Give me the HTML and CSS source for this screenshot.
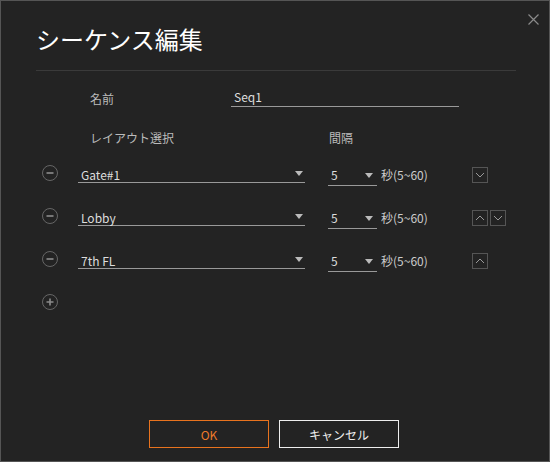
FILE: index.html
```html
<!DOCTYPE html>
<html lang="ja">
<head>
<meta charset="utf-8">
<title>シーケンス編集</title>
<link rel="stylesheet" href="styles.css">
</head>
<body>
<div class="dialog">
  <button class="close" aria-label="閉じる">
    <svg width="11" height="11" viewBox="0 0 11 11"><path d="M0.5 0.5 L10.5 10.5 M10.5 0.5 L0.5 10.5" stroke="#8a8a8a" stroke-width="1.2" fill="none"/></svg>
  </button>
  <div class="header"><h1 class="title">シーケンス編集</h1></div>
  <div class="form">
    <div class="name-row">
      <div class="name-label">名前</div>
      <div class="name-input">Seq1</div>
    </div>
    <div class="head-row">
      <div class="head-layout">レイアウト選択</div>
      <div class="head-interval">間隔</div>
    </div>

    <div class="row">
      <span class="icon"><svg width="16" height="16" viewBox="0 0 16 16"><circle cx="8" cy="8" r="7.5" fill="none" stroke="#666"/><path d="M4.5 8 H11.5" stroke="#8c8c8c" stroke-width="1.6"/></svg></span>
      <div class="select"><span class="val">Gate#1</span><span class="tri"></span></div>
      <div class="interval"><span class="val">5</span><span class="tri"></span></div>
      <div class="unit">秒(5~60)</div>
      <div class="arrows">
        <span class="arrow"><svg width="14" height="14" viewBox="0 0 14 14"><path d="M3 5 L7 9 L11 5" stroke="#999" fill="none"/></svg></span>
      </div>
    </div>

    <div class="row">
      <span class="icon"><svg width="16" height="16" viewBox="0 0 16 16"><circle cx="8" cy="8" r="7.5" fill="none" stroke="#666"/><path d="M4.5 8 H11.5" stroke="#8c8c8c" stroke-width="1.6"/></svg></span>
      <div class="select"><span class="val">Lobby</span><span class="tri"></span></div>
      <div class="interval"><span class="val">5</span><span class="tri"></span></div>
      <div class="unit">秒(5~60)</div>
      <div class="arrows">
        <span class="arrow"><svg width="14" height="14" viewBox="0 0 14 14"><path d="M3 9 L7 5 L11 9" stroke="#999" fill="none"/></svg></span>
        <span class="arrow"><svg width="14" height="14" viewBox="0 0 14 14"><path d="M3 5 L7 9 L11 5" stroke="#999" fill="none"/></svg></span>
      </div>
    </div>

    <div class="row">
      <span class="icon"><svg width="16" height="16" viewBox="0 0 16 16"><circle cx="8" cy="8" r="7.5" fill="none" stroke="#666"/><path d="M4.5 8 H11.5" stroke="#8c8c8c" stroke-width="1.6"/></svg></span>
      <div class="select"><span class="val">7th FL</span><span class="tri"></span></div>
      <div class="interval"><span class="val">5</span><span class="tri"></span></div>
      <div class="unit">秒(5~60)</div>
      <div class="arrows">
        <span class="arrow"><svg width="14" height="14" viewBox="0 0 14 14"><path d="M3 9 L7 5 L11 9" stroke="#999" fill="none"/></svg></span>
      </div>
    </div>

    <div class="row">
      <span class="icon"><svg width="16" height="16" viewBox="0 0 16 16"><circle cx="8" cy="8" r="7.5" fill="none" stroke="#666"/><path d="M4.5 8 H11.5 M8 4.5 V11.5" stroke="#8c8c8c" stroke-width="1.6"/></svg></span>
    </div>
  </div>
  <div class="footer">
    <button class="btn btn-ok">OK</button>
    <button class="btn btn-cancel">キャンセル</button>
  </div>
</div>
</body>
</html>
```

FILE: styles.css
```css
* { box-sizing: border-box; }
html, body { margin: 0; padding: 0; background: #232323; }
body {
  font-family: "Noto Sans CJK JP", "Noto Sans", sans-serif;
  font-size: 12px;
  color: #ddd;
}
.dialog {
  position: relative;
  width: 550px;
  height: 462px;
  border: 1px solid #555;
  background: #232323;
  display: flex;
  flex-direction: column;
}
.close {
  position: absolute;
  top: 13px;
  left: 527px;
  width: 11px;
  height: 11px;
  padding: 0;
  border: 0;
  background: none;
  display: block;
}
.close svg { display: block; }
.header {
  margin: 0 33px 0 35px;
  padding: 21px 0 14px 0;
  border-bottom: 1px solid #3a3a3a;
}
.title {
  margin: 0;
  font-size: 24px;
  line-height: 34px;
  font-weight: 400;
  color: #fff;
}
.form {
  padding-left: 41px;
  margin-top: 18px;
}
.name-row {
  display: flex;
  align-items: flex-start;
  padding-left: 48px;
}
.name-label {
  width: 141px;
  margin-top: 2px;
  line-height: 15px;
  color: #bbb;
}
.name-input {
  width: 228px;
  line-height: 15px;
  padding: 0 0 2px 3px;
  border-bottom: 1px solid #999;
  color: #ddd;
}
.head-row {
  display: flex;
  margin-top: 23px;
  padding-left: 48px;
  line-height: 15px;
  color: #bbb;
  margin-bottom: 8px;
}
.head-layout { width: 239px; }
.row {
  display: flex;
  align-items: flex-start;
  height: 43px;
}
.icon {
  display: block;
  width: 16px;
  height: 16px;
  margin-top: 12px;
}
.icon svg { display: block; }
.select {
  display: flex;
  align-items: flex-start;
  justify-content: space-between;
  width: 227px;
  margin: 14px 0 0 20px;
  height: 16px;
  padding: 0 2px 0 3px;
  line-height: 15px;
  border-bottom: 1px solid #999;
}
.interval {
  display: flex;
  align-items: flex-start;
  justify-content: space-between;
  width: 49px;
  margin: 14px 0 0 23px;
  height: 19px;
  padding: 0 4px 0 3px;
  line-height: 15px;
  border-bottom: 1px solid #999;
}
.tri {
  display: block;
  width: 0;
  height: 0;
  border-left: 4px solid transparent;
  border-right: 4px solid transparent;
  border-top: 5px solid #bbb;
  margin-top: 4px;
}
.interval .tri { margin-top: 6px; }
.unit {
  width: 91px;
  margin: 14px 0 0 4px;
  line-height: 15px;
  color: #ccc;
}
.arrows {
  display: flex;
  gap: 2px;
  margin-top: 14px;
}
.arrow {
  display: block;
  width: 16px;
  height: 16px;
  border: 1px solid #555;
}
.arrow svg { display: block; }
.footer {
  margin-top: auto;
  display: flex;
  justify-content: center;
  gap: 10px;
  padding: 0 2px 13px 0;
}
.btn {
  width: 120px;
  height: 28px;
  background: transparent;
  font-family: inherit;
  font-size: 12px;
  padding: 0;
}
.btn-ok {
  border: 1px solid #e8731e;
  color: #ee7a2a;
}
.btn-cancel {
  border: 1px solid #eee;
  color: #eee;
}
```
